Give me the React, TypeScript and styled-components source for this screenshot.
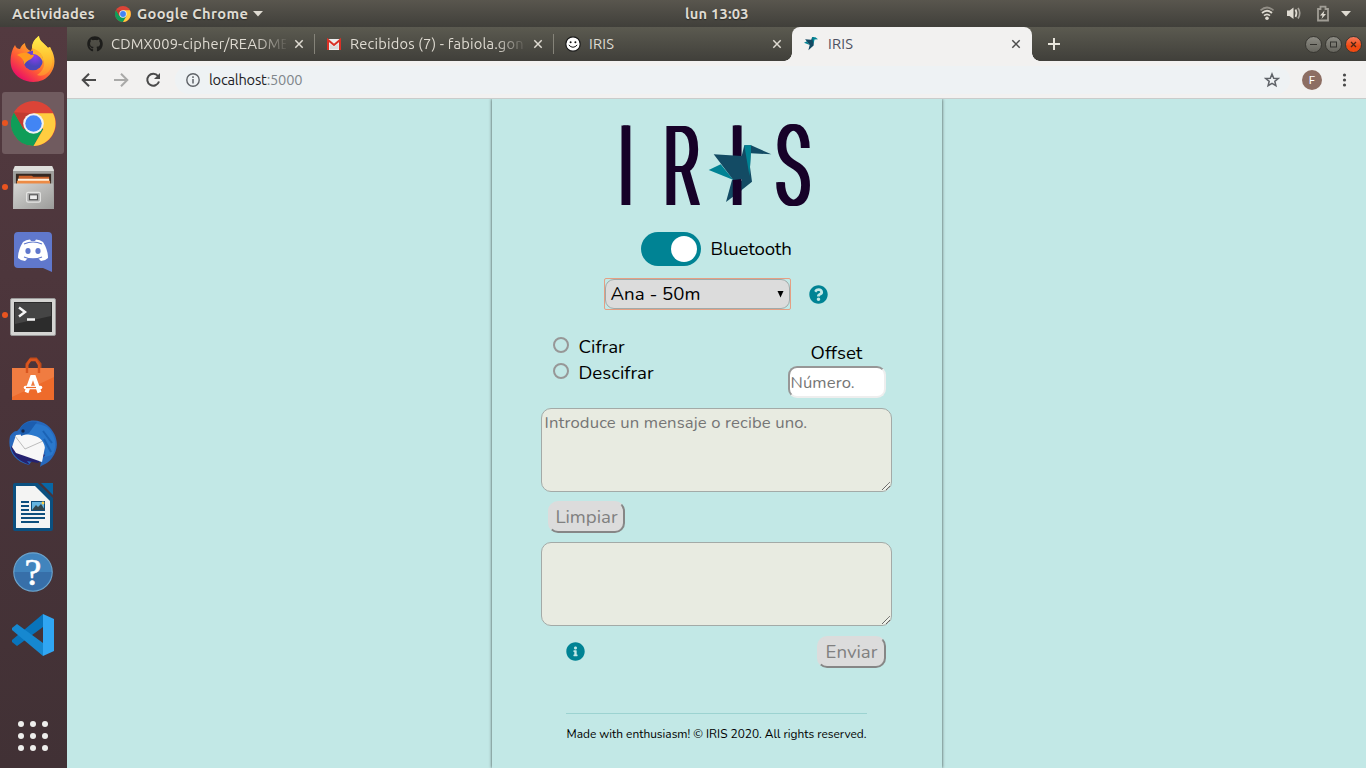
import React from "react";
import styled, { createGlobalStyle } from "styled-components";
import { FaGithub, FaInfoCircle, FaQuestionCircle } from "react-icons/fa";

const GlobalStyle = createGlobalStyle`
  *, *::before, *::after { box-sizing: border-box; }
  html, body { margin: 0; padding: 0; overflow: hidden; }
`;

const ui = `"Ubuntu", "Noto Sans", sans-serif`;
const web = `"Nunito", "Lato", sans-serif`;

const Desktop = styled.div`
  width: 1366px;
  height: 768px;
  display: flex;
  flex-direction: column;
  overflow: hidden;
  font-family: ${ui};
`;

const TopBar = styled.header`
  height: 27px;
  flex: none;
  display: flex;
  align-items: center;
  background: linear-gradient(#59564e, #403f3a);
  color: #dfdbd2;
  font-size: 14.67px;
  font-weight: 700;
  line-height: 27px;
  letter-spacing: 0.22px;
  white-space: nowrap;
  text-shadow: 0 1px 1px rgba(0, 0, 0, 0.4);
`;
const Activities = styled.span`
  width: 103px;
  padding-left: 12px;
  flex: none;
`;
const AppMenu = styled.div`
  display: flex;
  align-items: center;
  gap: 6px;
  width: 582px;
  padding-left: 12px;
  flex: none;
  letter-spacing: 0.36px;
  svg:last-child { margin-left: -1px; }
`;
const Tray = styled.div`
  margin-left: auto;
  display: flex;
  align-items: center;
  width: 108px;
  flex: none;
`;

const Main = styled.div`
  flex: 1;
  display: flex;
  min-height: 0;
`;
const Dock = styled.nav`
  width: 67px;
  flex: none;
  display: flex;
  flex-direction: column;
  align-items: center;
  background: linear-gradient(#533a40, #4a343a 50%, #41313580), #413135;
`;
const DockItem = styled.div<{ $active?: boolean; $running?: boolean; $shift?: number }>`
  width: 62px;
  height: 62px;
  margin: 1px 1px 1px 0;
  padding-top: ${(p) => p.$shift ?? 0}px;
  flex: none;
  display: flex;
  align-items: center;
  justify-content: center;
  position: relative;
  border-radius: 3px;
  background: ${(p) => (p.$active ? "#705b5f" : "transparent")};
  &::before {
    content: "";
    display: ${(p) => (p.$running ? "block" : "none")};
    position: absolute;
    left: 0;
    top: 28px;
    width: 6px;
    height: 6px;
    border-radius: 50%;
    background: #e95420;
  }
`;
const AppsButton = styled.div`
  margin: auto 1px 17px 0;
  display: grid;
  grid-template-columns: repeat(3, 6px);
  gap: 6px;
  i {
    height: 6px;
    border-radius: 50%;
    background: #eeeeec;
  }
`;

const Browser = styled.section`
  flex: 1;
  min-width: 0;
  display: flex;
  flex-direction: column;
`;
const TabStrip = styled.div`
  height: 34px;
  flex: none;
  display: flex;
  padding-left: 9px;
  background: linear-gradient(#5b5a50, #403f3a);
`;
const Tab = styled.div<{ $active?: boolean; $divider?: boolean }>`
  width: ${(p) => (p.$active ? 240 : 239)}px;
  margin-left: ${(p) => (p.$active ? -1 : 0)}px;
  flex: none;
  display: flex;
  align-items: center;
  padding: 0 10px 0 ${(p) => (p.$active ? 12 : 11)}px;
  position: relative;
  border-radius: 8px 8px 0 0;
  background: ${(p) => (p.$active ? "#f2f1f0" : "transparent")};
  color: ${(p) => (p.$active ? "#4c5060" : "#dfdbd2")};
  &::after {
    content: "";
    display: ${(p) => (p.$divider ? "block" : "none")};
    position: absolute;
    right: 0;
    top: 7px;
    width: 1px;
    height: 20px;
    background: #858379;
  }
`;
const TabIcon = styled.span`
  width: 16px;
  height: 16px;
  flex: none;
  display: flex;
  align-items: center;
`;
const TabTitle = styled.span<{ $fade?: boolean }>`
  flex: 1;
  min-width: 0;
  margin: 0 7px 0 8px;
  white-space: nowrap;
  font-size: 14.67px;
  line-height: 20px;
  letter-spacing: 0.17px;
  mask-image: ${(p) => (p.$fade ? "linear-gradient(90deg, #000 145px, transparent 178px)" : "none")};
`;
const CurveLeft = styled.span`
  position: absolute;
  left: -8px;
  bottom: 0;
  width: 8px;
  height: 8px;
  background: radial-gradient(circle at 0 0, transparent 7.5px, #f2f1f0 8px);
`;
const CurveRight = styled(CurveLeft)`
  left: auto;
  right: -8px;
  background: radial-gradient(circle at 100% 0, transparent 7.5px, #f2f1f0 8px);
`;
const NewTab = styled.span`
  display: flex;
  align-items: center;
  margin-left: 15px;
`;
const WindowButtons = styled.div`
  display: flex;
  align-items: center;
  gap: 3px;
  margin-left: auto;
  padding-right: 4px;
`;
const WindowButton = styled.span<{ $close?: boolean }>`
  width: 17px;
  height: 17px;
  display: flex;
  border-radius: 50%;
  border: 1px solid #383732;
  background: ${(p) => (p.$close ? "linear-gradient(#f67b5d, #f04a12 60%)" : "linear-gradient(#8d8c84, #66655e)")};
`;

const Toolbar = styled.div`
  height: 38px;
  flex: none;
  display: flex;
  align-items: center;
  background: #f2f1f0;
  border-bottom: 1px solid #c9cccb;
`;
const NavButtons = styled.div`
  width: 108px;
  padding-left: 14px;
  display: flex;
  gap: 16px;
`;
const Omnibox = styled.div`
  width: 1115px;
  height: 28px;
  border-radius: 14px;
  background: #eef2f4;
  display: flex;
  align-items: center;
  padding: 0 10px 0 11px;
`;
const Address = styled.span`
  margin-left: 9px;
  flex: 1;
  font-size: 14.67px;
  line-height: 20px;
  letter-spacing: -0.22px;
  color: #202124;
  em {
    font-style: normal;
    color: #80868b;
  }
`;
const Avatar = styled.span`
  width: 20px;
  height: 20px;
  margin: 0 17px 0 12px;
  border-radius: 50%;
  background: #8d6e63;
  color: #fff;
  font: 11.5px/20px Roboto, sans-serif;
  text-align: center;
`;

const Page = styled.main`
  flex: 1;
  min-height: 0;
  display: flex;
  justify-content: center;
  background: #c2e8e6;
  overflow: hidden;
`;
const Panel = styled.div`
  width: 450px;
  display: flex;
  flex-direction: column;
  font-family: ${web};
  color: #000;
  box-shadow: 0 0 3px rgba(0, 0, 0, 0.7);
`;
const LogoBox = styled.div`
  height: 110px;
  padding: 11px 0 0 108px;
  margin-bottom: 23px;
  svg { display: block; overflow: visible; }
`;
const LogoText = styled.text`
  font-family: Roboto, sans-serif;
  font-weight: 300;
  font-size: 111px;
  fill: #170229;
  text-shadow: -4.5px 0 #170229, -2px 0 #170229, 2px 0 #170229, 4.5px 0 #170229;
`;
const SwitchRow = styled.div`
  display: flex;
  align-items: center;
  gap: 10px;
  height: 34px;
  padding-left: 149px;
`;
const Switch = styled.span`
  width: 60px;
  height: 34px;
  padding: 4px;
  border-radius: 17px;
  background: #008394;
  display: flex;
  justify-content: flex-end;
  &::after {
    content: "";
    width: 26px;
    height: 26px;
    border-radius: 50%;
    background: #fff;
  }
`;
const Label = styled.span<{ $ls?: number }>`
  font-size: 18.67px;
  line-height: 26px;
  letter-spacing: ${(p) => p.$ls ?? 0}px;
  white-space: nowrap;
`;
const SelectRow = styled.div`
  display: flex;
  align-items: center;
  gap: 18px;
  margin-top: 12px;
  padding-left: 112px;
  color: #008394;
`;
const Select = styled.div`
  width: 187px;
  height: 32px;
  border: 1.5px solid #e59f83;
  border-radius: 2px;
`;
const SelectFace = styled.div`
  height: 100%;
  display: flex;
  align-items: center;
  justify-content: space-between;
  padding: 0 5px;
  border: 1px solid #a0aaa9;
  border-radius: 9px;
  background: #dcdcdc;
  color: #000;
`;
const ModeRow = styled.div`
  display: flex;
  justify-content: space-between;
  height: 98px;
  padding: 24px 56px 0 61px;
`;
const Radio = styled.div`
  display: flex;
  gap: 10px;
  height: 26px;
  &::before {
    content: "";
    width: 16px;
    height: 16px;
    margin-top: 3px;
    border: 2px solid #979797;
    border-radius: 50%;
  }
`;
const OffsetField = styled.div`
  width: 98px;
  padding-top: 6px;
  display: flex;
  flex-direction: column;
  align-items: center;
`;
const NumberInput = styled.div`
  width: 98px;
  height: 32px;
  padding-left: 1px;
  border: 2px solid;
  border-color: #979797 #eee #eee #979797;
  border-radius: 9px;
  background: #fff;
  color: #757575;
  font-size: 16.67px;
  line-height: 29px;
  white-space: nowrap;
  letter-spacing: 0.1px;
`;
const TextArea = styled.div`
  width: 351px;
  height: 84px;
  margin-left: 49px;
  padding: 3px 2px 2px 3px;
  flex: none;
  display: flex;
  border: 1px solid #a3aaa7;
  border-radius: 10px;
  background: #e8ebe1;
  color: #757575;
  font-size: 16.67px;
  line-height: 22px;
  letter-spacing: 0.13px;
  svg { margin: auto -2px -2px auto; flex: none; }
`;
const Actions = styled.div<{ $left: number; $drop?: number }>`
  display: flex;
  align-items: center;
  justify-content: space-between;
  height: 50px;
  padding: ${(p) => p.$drop ?? 0}px 56px 0 ${(p) => p.$left}px;
  color: #008394;
  flex: none;
`;
const Button = styled.div<{ $w: number }>`
  width: ${(p) => p.$w}px;
  height: 32px;
  padding-left: 1px;
  border: 2px solid;
  border-color: #dcdcdc #868686 #868686 #dcdcdc;
  border-radius: 10px;
  background: #dcdcdc;
  color: #808080;
  font-size: 18.67px;
  line-height: 28px;
  text-align: center;
`;
const Footer = styled.footer`
  width: 301px;
  margin: 37px 0 0 74px;
  padding: 11px 0 0 1px;
  border-top: 1px solid #9cd3d1;
  font-size: 11.9px;
  line-height: 18px;
  white-space: nowrap;
`;

const ChromeIcon = ({ size }: { size: number }) => (
  <svg width={size} height={size} viewBox="0 0 48 48">
    <circle cx="24" cy="24" r="24" fill="#db4437" />
    <path d="M3.2 12A24 24 0 0 0 24 48L34.4 30 24 24 13.6 30Z" fill="#0f9d58" />
    <path d="M24 48A24 24 0 0 0 44.8 13H24L34.4 30Z" fill="#ffcd40" />
    <path d="M3.2 12 13.6 30 24 13Z" fill="#c23b30" />
    <circle cx="24" cy="24" r="11" fill="#f1f1f1" />
    <circle cx="24" cy="24" r="8.8" fill="#4285f4" />
  </svg>
);

const Firefox = () => (
  <svg width="46" height="48" viewBox="0 0 46 48">
    <defs>
      <linearGradient id="ff" x1=".9" y1=".05" x2=".2" y2="1">
        <stop offset="0" stopColor="#fff44f" />
        <stop offset=".35" stopColor="#ffa229" />
        <stop offset=".65" stopColor="#ff5a36" />
        <stop offset="1" stopColor="#e5006f" />
      </linearGradient>
      <radialGradient id="fp" cx=".6" cy=".3">
        <stop offset="0" stopColor="#8d3df0" />
        <stop offset="1" stopColor="#4b46ba" />
      </radialGradient>
      <linearGradient id="fy" x1=".6" y1="0" x2=".6" y2="1">
        <stop offset="0" stopColor="#fff04d" />
        <stop offset=".6" stopColor="#ffbd2e" />
        <stop offset="1" stopColor="#ff8a30" />
      </linearGradient>
    </defs>
    <path d="M5 10C6 13 8 14 10 14C11 11 13 9 15 8C15 12 18 15 21 16L22 13C22 7 26 3 29 1C29 6 34 8 38 13C39 11 41 12 41 14C48 26 44 39 33 45C21 50 7 45 2 34C-1 26 1 16 5 10Z" fill="url(#ff)" />
    <path d="M22 13C22 7 26 3 29 1C29 6 34 8 38 13C44 21 44 34 36 39C33 41 30 41 27 40C33 36 36 30 33 24C30 17 26 15 22 13Z" fill="url(#fy)" />
    <circle cx="23" cy="25.500" r="9.800" fill="url(#fp)" />
    <path d="M7 20C12 17 18 17 21 20C25 19 24 21 23 22C21 24 21 24 19 25C16 27 15 28 14 30C14 24 11 22 7 20Z" fill="#ff9a1f" />
    <path d="M23 14C28 15 34 19 33 27C31 22 27 19 23 19Z" fill="#ffb52c" />
  </svg>
);

const Files = () => (
  <svg width="43" height="45" viewBox="0 0 44 46">
    <defs>
      <linearGradient id="cab" x1="0" y1="0" x2="1" y2="1">
        <stop offset="0" stopColor="#d6d6d4" />
        <stop offset="1" stopColor="#9b9b99" />
      </linearGradient>
    </defs>
    <path d="M3 1H41L43 5V43H1V5Z" fill="#9f9f9d" />
    <path d="M3 1H41L43 6H1Z" fill="#dededc" />
    <path d="M4 9H40V22H4Z" fill="#352822" />
    <path d="M7 11H20L22 12H38V20H6Z" fill="#c9602a" />
    <path d="M6 14H38V20H6Z" fill="#fff0dc" />
    <path d="M5 16H39V20H5Z" fill="#ed8b45" />
    <path d="M2 19H42L43 45H1Z" fill="url(#cab)" />
    <rect x="15" y="28" width="14" height="10" rx="1.500" fill="#aaa" stroke="#e5e5e3" strokeWidth="1.300" />
    <rect x="18" y="30.500" width="8" height="5" fill="#eee" stroke="#444" />
  </svg>
);

const Discord = () => (
  <svg width="40" height="42" viewBox="0 0 40 42">
    <path d="M5 1H35Q39 1 39 5V41L30 37H5Q1 37 1 33V5Q1 1 5 1Z" fill="#6078cc" />
    <path d="M10 11Q13 8.500 17 8.500L18 10H22L23 8.500Q27 8.500 30 11Q35 19 35 27Q32 30 28 30L25 27Q20 28 15 27L12 30Q8 30 5 27Q5 19 10 11Z" fill="#fff" />
    <ellipse cx="15" cy="20" rx="2.600" ry="2.900" fill="#6078cc" />
    <ellipse cx="25" cy="20" rx="2.600" ry="2.900" fill="#6078cc" />
    <path d="M11 13Q20 9 29 13M11 26Q20 30 29 26" fill="none" stroke="#6078cc" strokeWidth="1.200" />
  </svg>
);

const Terminal = () => (
  <svg width="46" height="38" viewBox="0 0 46 38">
    <rect x=".5" y=".5" width="45" height="37" rx="1.500" fill="#d5d5d3" stroke="#999" />
    <rect x="4" y="4" width="38" height="30" fill="#2c2c2c" />
    <path d="M5 5H41V18L5 26Z" fill="#454545" />
    <path d="M9 9.500 15 14 9 18.500M17 21.500H25" fill="none" stroke="#f5f5f5" strokeWidth="2.400" />
  </svg>
);

const Software = () => (
  <svg width="42" height="44" viewBox="0 0 42 44">
    <path d="M15 15V7L19 2H24L28 7V15" fill="none" stroke="#bd4919" strokeWidth="3" />
    <path d="M0 11H42V43H0Z" fill="#ee6b2b" />
    <path d="M0 11H42V20L0 40Z" fill="#f38b53" opacity=".55" />
    <path d="M15 16V8L18 3H24L27 8V16" fill="none" stroke="#d9551f" strokeWidth="2.400" />
    <path d="M14.500 35.500 20 20H22L27.500 35.500" fill="none" stroke="#fff" strokeWidth="4" />
    <path d="M13.500 30.500H28.500" stroke="#fff" strokeWidth="3.600" strokeLinecap="round" />
    <path d="M14 30.500H24" stroke="#ee6b2b" strokeWidth="1.200" />
  </svg>
);

const Thunderbird = () => (
  <svg width="48" height="48" viewBox="0 0 48 48">
    <path d="M11 9C16 0 29-1 38 6C49 15 51 29 43 39C39 45 34 45 31 48L32 43H22L20 46C5 42-2 31 1 17C3 14 5 12 8 12Z" fill="#2769bd" />
    <path d="M2 28C4 38 11 42 21 46L18 42L29 44L36 36L8 22Z" fill="#25226f" />
    <path d="M7 16 31 14 37 23 33 43 7 34 3 28Z" fill="#f7f7f7" />
    <path d="M6 17 16 30 34 22" fill="none" stroke="#bcbcbc" />
    <path d="M13 15C15 5 27 2 38 8C48 17 48 29 43 36L36 38C38 25 32 18 26 17C21 15 17 16 13 15Z" fill="#2a78cc" />
    <path d="M11 10C14 4 21 1 28 3L20 14L12 17Z" fill="#1c5daf" />
    <circle cx="14" cy="12" r="1.700" fill="#13294e" />
    <path d="M34 12 43 24M35 20 42 33" stroke="#1b63b5" strokeWidth="2" />
  </svg>
);

const Writer = () => (
  <svg width="40" height="48" viewBox="0 0 40 48">
    <path d="M2 0H25L40 14V46Q40 48 38 48H2Q0 48 0 46V2Q0 0 2 0Z" fill="#0b5080" />
    <path d="M3 3H22L37 18V45H3Z" fill="#f4f4f3" />
    <path d="M24 0H25L40 15V12L28 0Z" fill="#493439" />
    <path d="M28 0H40V12Z" fill="#0867a5" />
    <path d="M8 19H16M8 23H16M8 27H16M8 31H32M8 35H32M8 39H26" stroke="#0e4f7d" strokeWidth="2" />
    <rect x="18.500" y="18.500" width="13" height="9" fill="#65b5e0" stroke="#0e4f7d" />
    <path d="M19 27 23 22 25 24 28 21 32 27Z" fill="#34474c" />
    <circle cx="30" cy="20" r="1.400" fill="#ffd146" />
  </svg>
);

const Help = () => (
  <svg width="40" height="40" viewBox="0 0 40 40">
    <circle cx="20" cy="20" r="19.200" fill="#4184bd" stroke="#6ca3cb" strokeWidth="1.200" />
    <path d="M1.500 20A18.500 18.500 0 0 0 38.500 20Z" fill="#376fa9" />
    <text x="20" y="33" textAnchor="middle" fontFamily="Liberation Serif, serif" fontSize="38" fill="#fff" stroke="#fff" strokeWidth=".6">?</text>
  </svg>
);

const Code = () => (
  <svg width="42" height="42" viewBox="0 0 42 42">
    <path d="M5 32 0 28V26L31 0V13Z" fill="#0874bc" />
    <path d="M5 10 0 14V16L31 42V29Z" fill="#1688d0" />
    <path d="M31 0 42 5V37L31 42Z" fill="#30a6f3" />
  </svg>
);

const BirdIcon = () => (
  <svg width="14" height="14" viewBox="0 0 64 62">
    <path d="M0 25 13 18 27 36Z" fill="#008394" />
    <path d="M5 9 33 11 37 0H46L44 38 20 60 26 36Z" fill="#134b64" />
    <path d="M36 0H52L64 9 48 10 44 30Z" fill="#008394" />
  </svg>
);

const Smile = () => (
  <svg width="16" height="16" viewBox="0 0 16 16">
    <circle cx="8" cy="8" r="7.200" fill="#fff" stroke="#181818" strokeWidth="1.200" />
    <circle cx="5.600" cy="6.300" r="1" fill="#111" />
    <circle cx="10.400" cy="6.300" r="1" fill="#111" />
    <path d="M3.800 9Q8 13.500 12.200 9" fill="none" stroke="#111" />
  </svg>
);

const Gmail = () => (
  <svg width="16" height="16" viewBox="0 0 16 16">
    <path d="M1 3H15V14H1Z" fill="#eee" />
    <path d="M3.500 13V8L8 11L12.500 8V13" fill="#dadada" />
    <path d="M2 14V4L8 9L14 4V14" fill="none" stroke="#d93025" strokeWidth="2" />
  </svg>
);

const Close = ({ color }: { color: string }) => (
  <svg width="12" height="12" viewBox="0 0 12 12">
    <path d="M2.300 2.300 9.700 9.700M9.700 2.300 2.300 9.700" stroke={color} strokeWidth="1.500" />
  </svg>
);

const Grip = () => (
  <svg width="10" height="10" viewBox="0 0 10 10">
    <path d="M1 9 9 1M5 9 9 5" stroke="#444" strokeWidth="1" strokeDasharray="1.100 .4" />
    <path d="M2 9.500 9 2.500M6 9.500 9 6.500" stroke="#fff" strokeWidth=".7" />
  </svg>
);

const Logo = () => (
  <svg width="230" height="100" viewBox="600 110 230 100">
    <path d="M732 180 742 181V190L726 202Z" fill="#134b64" />
    <LogoText transform="translate(0 205) scale(.5 1)" x="1237 1328.500 1459.500 1553">IRIS</LogoText>
    <path d="M708.700 170 720.700 164.300 733.500 180Z" fill="#008394" />
    <path d="M713.700 154.300 741.700 156 744.300 145.300H751L750 167 752 181.700 741.700 190V179L733.300 180Z" fill="#134b64" />
    <path d="M744.300 145.300H751.300L749.500 176Z" fill="#008394" />
    <path d="M751 145.300 771.300 154.300 751 153.300Z" fill="#134b64" />
  </svg>
);

const dockItems = [
  { key: "firefox", icon: <Firefox />, shift: 0 },
  { key: "chrome", icon: <ChromeIcon size={45} />, active: true, running: true, shift: 0 },
  { key: "files", icon: <Files />, running: true, shift: 0 },
  { key: "discord", icon: <Discord />, shift: 2 },
  { key: "terminal", icon: <Terminal />, running: true, shift: 3 },
  { key: "software", icon: <Software />, shift: 0 },
  { key: "mail", icon: <Thunderbird />, shift: 0 },
  { key: "writer", icon: <Writer />, shift: 0 },
  { key: "help", icon: <Help />, shift: 2 },
  { key: "code", icon: <Code />, shift: 0 },
];

export default function App() {
  return (
    <Desktop>
      <GlobalStyle />
      <TopBar>
        <Activities>Actividades</Activities>
        <AppMenu>
          <ChromeIcon size={16} />
          <span>Google Chrome</span>
          <svg width="10" height="6" viewBox="0 0 10 6"><path d="M0 0H10L5 5.500Z" fill="#dfdbd2" /></svg>
        </AppMenu>
        <span>lun 13:03</span>
        <Tray>
          <svg width="108" height="27" viewBox="1258 0 108 27">
            <g fill="none" stroke="#dfdbd2" strokeWidth="1.700">
              <path d="M1260.500 10.300Q1267 4.700 1273.500 10.300" opacity=".45" />
              <path d="M1262 13Q1267 8.500 1272 13M1264 15.700Q1267 13 1270 15.700" />
            </g>
            <circle cx="1267" cy="18.300" r="1.800" fill="#dfdbd2" />
            <path d="M1287 10.500H1289.500L1293.500 7.500V19L1289.500 16H1287Z" fill="#dfdbd2" />
            <path d="M1295.500 9.500Q1297.500 13.200 1295.500 17" fill="none" stroke="#dfdbd2" strokeWidth="1.700" />
            <path d="M1298 8Q1301.500 13.200 1298 18.500" fill="none" stroke="#dfdbd2" strokeWidth="1.700" opacity=".6" />
            <path d="M1318 9H1320.500V6.700H1325.500V9H1328V20.500H1318Z" fill="none" stroke="#a09d95" strokeWidth="1.800" />
            <path d="M1324.500 10.500 1320 15.500H1322.500L1321.500 19 1326 14H1323.500Z" fill="#dfdbd2" />
            <path d="M1341 11H1351L1346 16.500Z" fill="#dfdbd2" />
          </svg>
        </Tray>
      </TopBar>
      <Main>
        <Dock>
          {dockItems.map((d) => (
            <DockItem key={d.key} $active={d.active} $running={d.running} $shift={d.shift}>{d.icon}</DockItem>
          ))}
          <AppsButton>{Array.from({ length: 9 }, (_, i) => <i key={i} />)}</AppsButton>
        </Dock>
        <Browser>
          <TabStrip>
            <Tab $divider>
              <TabIcon><FaGithub size={16} color="#1d1d1b" /></TabIcon>
              <TabTitle $fade>CDMX009-cipher/README</TabTitle>
              <Close color="#dfdbd2" />
            </Tab>
            <Tab $divider>
              <TabIcon><Gmail /></TabIcon>
              <TabTitle $fade>Recibidos (7) - fabiola.gon</TabTitle>
              <Close color="#dfdbd2" />
            </Tab>
            <Tab>
              <TabIcon><Smile /></TabIcon>
              <TabTitle>IRIS</TabTitle>
              <Close color="#dfdbd2" />
            </Tab>
            <Tab $active>
              <CurveLeft />
              <TabIcon><BirdIcon /></TabIcon>
              <TabTitle>IRIS</TabTitle>
              <Close color="#4c4c4c" />
              <CurveRight />
            </Tab>
            <NewTab>
              <svg width="14" height="14" viewBox="0 0 14 14"><path d="M7 1V13M1 7H13" stroke="#e8e5dc" strokeWidth="2" /></svg>
            </NewTab>
            <WindowButtons>
              <WindowButton><svg width="15" height="15"><path d="M4 7.500H11" stroke="#33322e" /></svg></WindowButton>
              <WindowButton><svg width="15" height="15"><rect x="4.500" y="5" width="6" height="5" fill="none" stroke="#33322e" /></svg></WindowButton>
              <WindowButton $close><svg width="15" height="15"><path d="M5 5 10 10M10 5 5 10" stroke="#4b2515" strokeWidth="1.300" /></svg></WindowButton>
            </WindowButtons>
          </TabStrip>
          <Toolbar>
            <NavButtons>
              <svg width="16" height="16" viewBox="0 0 16 16"><path d="M15 8H2M8 1.700 1.700 8 8 14.300" fill="none" stroke="#4a4a4a" strokeWidth="2" /></svg>
              <svg width="16" height="16" viewBox="0 0 16 16"><path d="M1 8H14M8 1.700 14.300 8 8 14.300" fill="none" stroke="#a9a9a8" strokeWidth="2" /></svg>
              <svg width="16" height="16" viewBox="0 0 16 16"><path d="M13 4A6 6 0 1 0 14 9.500" fill="none" stroke="#4a4a4a" strokeWidth="2" /><path d="M15 1V7H9Z" fill="#4a4a4a" /></svg>
            </NavButtons>
            <Omnibox>
              <svg width="14" height="14" viewBox="0 0 14 14"><circle cx="7" cy="7" r="6.200" fill="none" stroke="#5f6368" strokeWidth="1.400" /><path d="M7 6V10.500M7 3.300V5" stroke="#5f6368" strokeWidth="1.500" /></svg>
              <Address>localhost<em>:5000</em></Address>
              <svg width="16" height="16" viewBox="0 0 16 16"><path d="M8 2 9.700 6.200 14.200 6.500 10.800 9.300 11.900 13.700 8 11.300 4.100 13.700 5.200 9.300 1.800 6.500 6.300 6.200Z" fill="none" stroke="#5f6368" strokeWidth="1.500" /></svg>
            </Omnibox>
            <Avatar>F</Avatar>
            <svg width="12" height="16" viewBox="0 0 12 16" fill="#4a4a4a"><circle cx="5.500" cy="3" r="1.600" /><circle cx="5.500" cy="8" r="1.600" /><circle cx="5.500" cy="13" r="1.600" /></svg>
          </Toolbar>
          <Page>
            <Panel>
              <LogoBox><Logo /></LogoBox>
              <SwitchRow>
                <Switch />
                <Label $ls={-0.2}>Bluetooth</Label>
              </SwitchRow>
              <SelectRow>
                <Select>
                  <SelectFace>
                    <Label>Ana - 50m</Label>
                    <svg width="7" height="7" viewBox="0 0 7 7"><path d="M.5 0H6.500L3.500 6.500Z" /></svg>
                  </SelectFace>
                </Select>
                <FaQuestionCircle size={19} />
              </SelectRow>
              <ModeRow>
                <div>
                  <Radio><Label>Cifrar</Label></Radio>
                  <Radio><Label>Descifrar</Label></Radio>
                </div>
                <OffsetField>
                  <Label>Offset</Label>
                  <NumberInput>Número.</NumberInput>
                </OffsetField>
              </ModeRow>
              <TextArea>Introduce un mensaje o recibe uno.<Grip /></TextArea>
              <Actions $left={56}><Button $w={77}>Limpiar</Button></Actions>
              <TextArea><Grip /></TextArea>
              <Actions $left={74} $drop={1}><FaInfoCircle size={19} /><Button $w={69}>Enviar</Button></Actions>
              <Footer>Made with enthusiasm! © IRIS 2020. All rights reserved.</Footer>
            </Panel>
          </Page>
        </Browser>
      </Main>
    </Desktop>
  );
}
